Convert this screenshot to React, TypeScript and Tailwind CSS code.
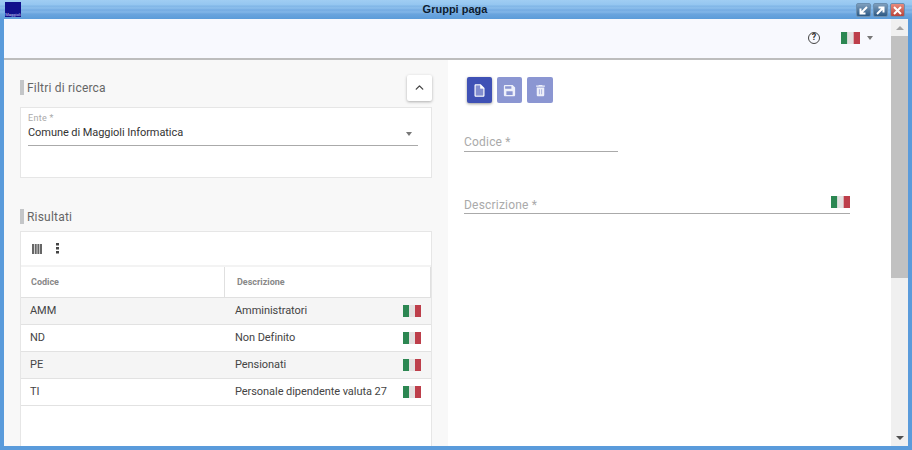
import { ChevronUp } from "lucide-react";

function Flag({ className }: { className: string }) {
  return (
    <svg className={`${className} blur-[0.4px]`} viewBox="0 0 18 12" preserveAspectRatio="none">
      <rect width="6" height="12" fill="#2f8f57" />
      <rect x="6" width="6" height="12" fill="#f1eeee" />
      <rect x="12" width="6" height="12" fill="#c8424e" />
      <rect width="18" height="12" fill="#000" opacity="0.05" />
    </svg>
  );
}

function WinButton({ kind }: { kind: "min" | "max" | "close" }) {
  const bg =
    kind === "close"
      ? "bg-gradient-to-b from-[#e88a7c] to-[#b8433a]"
      : "bg-gradient-to-b from-[#7f9fbd] to-[#2d5a85]";
  return (
    <div className={`w-[15px] h-[14px] rounded-[2px] border border-[#6b8fb0] flex items-center justify-center ${bg}`}>
      <svg width="11" height="11" viewBox="0 0 11 11" stroke="#fff" strokeWidth="2" fill="none">
        {kind === "min" && <path d="M9 2 3 8M2.500 3.500V8.500H7.500" />}
        {kind === "max" && <path d="M2 9 8 3M3.500 2.500H8.500V7.500" />}
        {kind === "close" && <path d="M2 2 9 9M9 2 2 9" />}
      </svg>
    </div>
  );
}

function Heading({ label }: { label: string }) {
  return (
    <div className="flex items-center h-[15px] border-l-4 border-[#c4c6c8] pl-[3px]">
      <span className="text-[12px] text-[#666] tracking-[0.2px]">{label}</span>
    </div>
  );
}

const rows = [
  { code: "AMM", desc: "Amministratori", bg: "bg-[#f5f5f5]" },
  { code: "ND", desc: "Non Definito", bg: "bg-white" },
  { code: "PE", desc: "Pensionati", bg: "bg-[#f5f5f5]" },
  { code: "TI", desc: "Personale dipendente valuta 27", bg: "bg-white" },
];

export default function App() {
  return (
    <div className="w-[912px] h-[450px] overflow-hidden flex flex-col bg-[#5a9bdb] font-['Roboto',sans-serif]">
      <div className="h-[19px] shrink-0 relative flex items-center justify-center bg-[linear-gradient(180deg,#a0cdf3_0,#94c6f0_5px,#7fb5e6_6px,#8dbfec_8px,#74abe2_10px,#82b6e8_12px,#6aa4de_14px,#5c9cd9_19px)]">
        <div className="absolute left-[5px] top-[2px] w-[16px] h-[15px] bg-[#10108c] flex flex-col justify-end items-center overflow-hidden">
          <span className="text-[4px] leading-[5px] text-[#cfd3f5]">Maggioli</span>
        </div>
        <span className="text-[11px] font-bold text-[#0d1b2e] font-['Liberation_Sans',sans-serif] ml-[-2px]">Gruppi paga</span>
        <div className="absolute right-[7px] top-[3px] flex gap-[2px]">
          <WinButton kind="min" />
          <WinButton kind="max" />
          <WinButton kind="close" />
        </div>
      </div>
      <div className="flex-1 min-h-0 flex mx-1 mb-1">
        <div className="flex-1 min-w-0 flex flex-col bg-white">
          <div className="h-[41px] shrink-0 flex items-center justify-end bg-[#f8f9fe] border-b-2 border-[#bdbdbd] pr-[18px] pb-[2px]">
            <div className="w-[12px] h-[12px] rounded-full border-[1.5px] border-[#444] flex items-center justify-center text-[9px] font-bold text-[#333] mr-[21px]">?</div>
            <Flag className="w-[19px] h-[12px]" />
            <div className="ml-[7px] w-0 h-0 border-x-[3px] border-x-transparent border-t-[4px] border-t-[#777]" />
          </div>
          <div className="flex-1 min-h-0 flex">
            <div className="w-[444px] shrink-0 bg-[#f8f8f8] px-4 flex flex-col overflow-hidden">
              <div className="flex items-center justify-between mt-[14px] h-[27px]">
                <Heading label="Filtri di ricerca" />
                <button className="w-[25px] h-[26px] bg-white rounded-[2px] shadow-[0_1px_3px_rgba(0,0,0,0.3)] flex items-center justify-center">
                  <ChevronUp size={13} strokeWidth={2.5} className="text-[#444]" />
                </button>
              </div>
              <div className="mt-[6px] h-[71px] bg-white border border-[#e6e6e6] pl-[7px] pr-2 pt-[4px]">
                <div className="text-[9px] leading-[12px] text-[#aaa] tracking-[0.3px]">Ente *</div>
                <div className="flex items-center justify-between h-[19px] border-b border-[#aaa] w-[390px] pb-[2px] box-content">
                  <span className="text-[11px] tracking-[-0.06px] text-[#333]">Comune di Maggioli Informatica</span>
                  <div className="mr-[6px] w-0 h-0 border-x-[3.500px] border-x-transparent border-t-[4px] border-t-[#777]" />
                </div>
              </div>
              <div className="mt-[31px]">
                <Heading label="Risultati" />
              </div>
              <div className="mt-[7px] flex-1 bg-white border border-[#e6e6e6] border-b-0 flex flex-col">
                <div className="h-[35px] shrink-0 flex items-center pl-[11px] border-b-2 border-[#f3f3f3]">
                  <svg width="10" height="10" viewBox="0 0 10 10" fill="#666">
                    <rect x="0" width="2" height="10" />
                    <rect x="2.700" width="2" height="10" />
                    <rect x="5.400" width="2" height="10" />
                    <rect x="8" width="2" height="10" />
                  </svg>
                  <svg className="ml-[14px]" width="3" height="11" viewBox="0 0 3 11" fill="#444">
                    <rect y="0" width="3" height="2.500" />
                    <rect y="4" width="3" height="2.500" />
                    <rect y="8" width="3" height="2.500" />
                  </svg>
                </div>
                <div className="h-[31px] shrink-0 flex items-center border-b border-[#e0e0e0] border-r text-[9px] font-bold text-[#888]">
                  <div className="w-[204px] h-full flex items-center pl-[10px] pt-[1px] border-r border-[#e0e0e0]">Codice</div>
                  <div className="pl-[12px] pt-[1px]">Descrizione</div>
                </div>
                {rows.map((r) => (
                  <div key={r.code} className={`h-[27px] shrink-0 flex items-center border-b border-[#e2e2e2] text-[11px] tracking-[-0.06px] text-[#444] ${r.bg}`}>
                    <div className="w-[214px] pl-[9px] pt-[1px]">{r.code}</div>
                    <div className="flex-1 whitespace-nowrap pt-[1px]">{r.desc}</div>
                    <Flag className="w-[18px] h-[12px] mr-[10px]" />
                  </div>
                ))}
              </div>
            </div>
            <div className="flex-1 min-w-0 pl-4 pt-[17px]">
              <div className="flex gap-[5px] ml-[3px]">
                <button className="w-[25px] h-[26px] bg-[#3f51b5] rounded-[2px] shadow-[0_1px_3px_rgba(0,0,0,0.4)] flex items-center justify-center">
                  <svg width="15" height="15" viewBox="0 0 24 24" fill="#fff">
                    <path d="M14 2H6c-1.100 0-1.990.9-1.990 2L4 20c0 1.100.89 2 1.990 2H18c1.100 0 2-.9 2-2V8l-6-6zM6 20V4h7v5h5v11H6z" />
                    <path d="M6 4h7v5h5v11H6z" opacity="0.35" />
                  </svg>
                </button>
                <button className="w-[25px] h-[26px] bg-[#8b96d2] rounded-[2px] flex items-center justify-center">
                  <svg width="15" height="15" viewBox="0 0 24 24" fill="#eef0fa">
                    <path d="M17 3H5c-1.110 0-2 .9-2 2v14c0 1.100.89 2 2 2h14c1.100 0 2-.9 2-2V7l-4-4zM15 9H5V5h10v4zM7 13h10v6H7z" fillRule="evenodd" />
                  </svg>
                </button>
                <button className="w-[26px] h-[26px] bg-[#8b96d2] rounded-[2px] flex items-center justify-center">
                  <svg width="15" height="15" viewBox="0 0 24 24" fill="#eef0fa">
                    <path d="M6 19c0 1.100.9 2 2 2h8c1.100 0 2-.9 2-2V7H6v12zM19 4h-3.500l-1-1h-5l-1 1H5v2h14V4z" />
                    <path d="M9.500 10h1v8h-1zM13.500 10h1v8h-1z" fill="#8b96d2" />
                  </svg>
                </button>
              </div>
              <div className="w-[154px] h-[20px] mt-[29px] border-b border-[#aaa] flex items-center text-[12px] text-[#aaa] tracking-[0.2px] pt-[1px]">Codice *</div>
              <div className="w-[386px] h-[26px] mt-[36px] border-b border-[#aaa] flex items-center justify-between text-[12px] text-[#aaa] tracking-[0.2px]">
                <span className="pt-[8px]">Descrizione *</span>
                <Flag className="w-[19px] h-[12px] mb-[-3px]" />
              </div>
            </div>
          </div>
        </div>
        <div className="w-[17px] shrink-0 bg-[#f0f0f0] flex flex-col items-center">
          <div className="h-[17px] shrink-0 flex items-center justify-center">
            <div className="w-0 h-0 border-x-[4px] border-x-transparent border-b-[4px] border-b-[#a3a3a3]" />
          </div>
          <div className="w-full h-[242px] bg-[#c1c1c1]" />
          <div className="flex-1" />
          <div className="h-[17px] shrink-0 flex items-center justify-center">
            <div className="w-0 h-0 border-x-[4px] border-x-transparent border-t-[4px] border-t-[#505050]" />
          </div>
        </div>
      </div>
    </div>
  );
}
